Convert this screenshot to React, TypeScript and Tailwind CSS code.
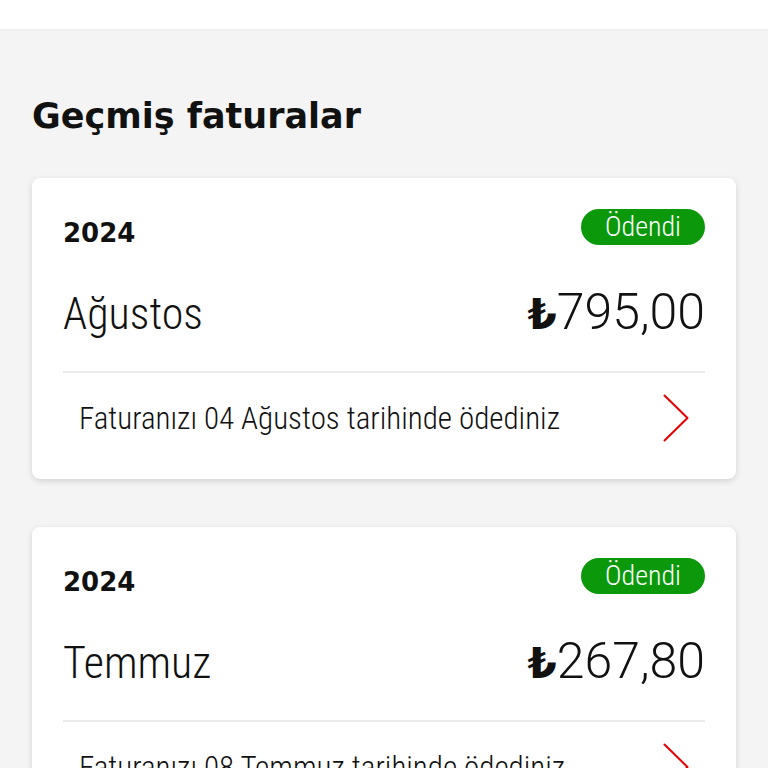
const bills = [
  { year: "2024", month: "Ağustos", amount: "795,00", note: "Faturanızı 04 Ağustos tarihinde ödediniz" },
  { year: "2024", month: "Temmuz", amount: "267,80", note: "Faturanızı 08 Temmuz tarihinde ödediniz" },
  { year: "2024", month: "Haziran", amount: "267,80", note: "Faturanızı 06 Haziran tarihinde ödediniz" },
];

function Chevron() {
  return (
    <svg width="26" height="48" viewBox="0 0 26 48" fill="none" className="shrink-0">
      <path d="M1.5 1.5 L24.5 24 L1.5 46.5" stroke="#e60000" strokeWidth="2" strokeLinecap="round" strokeLinejoin="round" />
    </svg>
  );
}

function BillCard({ year, month, amount, note }: (typeof bills)[number]) {
  return (
    <div className="bg-white rounded-lg shadow-[0_2px_6px_rgba(0,0,0,0.14)] px-[31px] pt-[31px] pb-[37px]">
      <div className="flex justify-between items-start h-9">
        <span className="mt-[11px] text-[26px] leading-none font-bold text-[#111] font-['DejaVu_Sans',sans-serif]">{year}</span>
        <span className="h-9 w-[124px] rounded-full bg-[#0b990b] flex items-center justify-center text-white text-[28px] leading-none font-light font-['Roboto_Condensed',sans-serif]">
          Ödendi
        </span>
      </div>
      <div className="mt-[42px] flex justify-between items-baseline text-[#111] font-light leading-none">
        <span className="text-[44px] font-['Roboto_Condensed',sans-serif]">{month}</span>
        <span className="text-[50px] font-['Roboto',sans-serif]">
          <span className="font-bold font-['DejaVu_Sans',sans-serif] text-[42px]">₺</span>
          {amount}
        </span>
      </div>
      <div className="mt-[34px] h-[2px] bg-[#ebebeb]" />
      <div className="mt-[21px] h-12 flex items-center justify-between pl-4 pr-4">
        <span className="text-[31px] font-light text-[#111] leading-none font-['Roboto_Condensed',sans-serif]">{note}</span>
        <Chevron />
      </div>
    </div>
  );
}

export default function App() {
  return (
    <div className="min-h-screen bg-[#f4f4f4]">
      <div className="h-[29px] bg-white shadow-[0_1px_3px_rgba(0,0,0,0.04)]" />
      <div className="px-8 pt-[70px] pb-12">
        <h1 className="text-[35px] leading-none font-bold text-[#111] font-['DejaVu_Sans',sans-serif]">Geçmiş faturalar</h1>
        <div className="mt-[44px] flex flex-col gap-12">
          {bills.map((b) => (
            <BillCard key={b.month} {...b} />
          ))}
        </div>
      </div>
    </div>
  );
}
